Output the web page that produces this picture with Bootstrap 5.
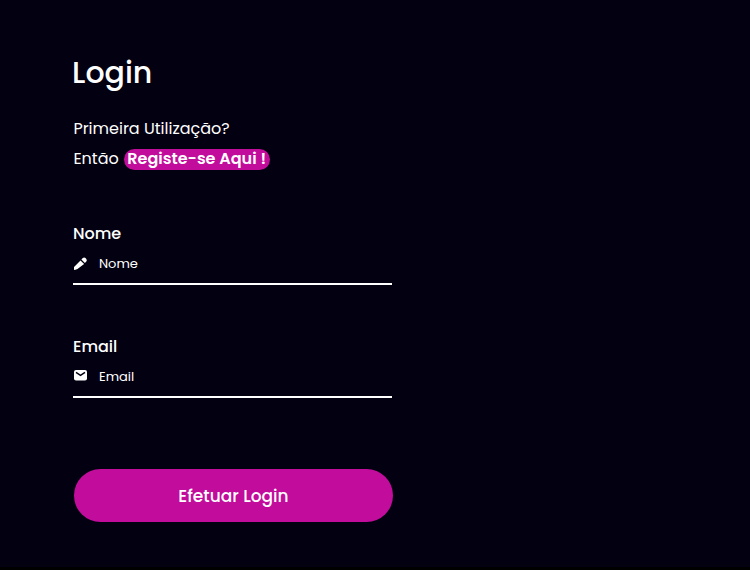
<!DOCTYPE html>
<html lang="pt">
<head>
<meta charset="utf-8">
<meta name="viewport" content="width=device-width, initial-scale=1">
<title>Login</title>
<link href="https://cdn.jsdelivr.net/npm/bootstrap@5.3.0/dist/css/bootstrap.min.css" rel="stylesheet">
<style>
body{background:#030011;color:#fff;font-family:Poppins,"Open Sans",sans-serif;height:570px;overflow:hidden;border-bottom:3px solid #000}
.login-panel{width:319px;margin-left:73.4px;padding-top:53px}
.login-title{font-size:30px;line-height:40px;font-weight:500;margin-left:-1.3px}
.intro{font-size:16px;line-height:30px;margin-top:21px}
.signup{background:#c20c9b;color:#fff;font-weight:600;border-radius:10.5px;line-height:20px;height:21px;width:146px;margin-left:5px}
.field-group{height:113px}
.field-label{font-size:16px;line-height:24px;font-weight:500;margin-left:-.4px}
.field-row{height:39px;border-bottom:2px solid #fff;padding-top:8px}
.field-row svg{flex:none;margin-right:11.6px}
.field-row input{background:transparent;border:0;outline:0;color:#fff;font-size:13px;line-height:20px;height:20px}
.field-row input::placeholder{color:#fff;opacity:1}
.btn-login{height:53px;background:#c20c9b;color:#fff;font-size:17px;line-height:55px;font-weight:500;margin-top:21px;margin-left:.6px;--bs-btn-hover-bg:#a90a87}
</style>
<script src="https://cdn.jsdelivr.net/npm/bootstrap@5.3.0/dist/js/bootstrap.bundle.min.js"></script>
</head>
<body>
<main class="login-panel">
<h1 class="login-title mb-0">Login</h1>
<div class="intro">
<div>Primeira Utilização?</div>
<div class="d-flex align-items-center"><span>Então</span><a href="#" class="signup text-decoration-none text-center">Registe-se Aqui !</a></div>
</div>
<form class="mt-5">
<div class="field-group">
<label class="field-label d-block" for="nome">Nome</label>
<div class="field-row d-flex align-items-start">
<svg width="14" height="20" viewBox="0 0 14 20" fill="#fff" overflow="visible"><path d="M1 15.8V13L7.5 6.4l3.6 3.5-6.6 5.2-2.8 1zM8.4 5.6l1.4-1.5q1.4-1.1 2.7 0l.8.8q1.1 1.3 0 2.6l-1.4 1.4z"/></svg>
<input class="w-100 p-0" id="nome" placeholder="Nome">
</div>
</div>
<div class="field-group">
<label class="field-label d-block" for="email">Email</label>
<div class="field-row d-flex align-items-start">
<svg width="14" height="20" viewBox="0 0 14 20" overflow="visible"><rect x="1" y="2.9" width="13" height="10.6" rx="2" fill="#fff"/><path d="M3 5.4 7.5 8.4 12 5.4" fill="none" stroke="#030011" stroke-width="1.5"/></svg>
<input class="w-100 p-0" id="email" placeholder="Email">
</div>
</div>
<button type="button" class="btn btn-login rounded-pill border-0 w-100 p-0">Efetuar Login</button>
</form>
</main>
</body>
</html>
